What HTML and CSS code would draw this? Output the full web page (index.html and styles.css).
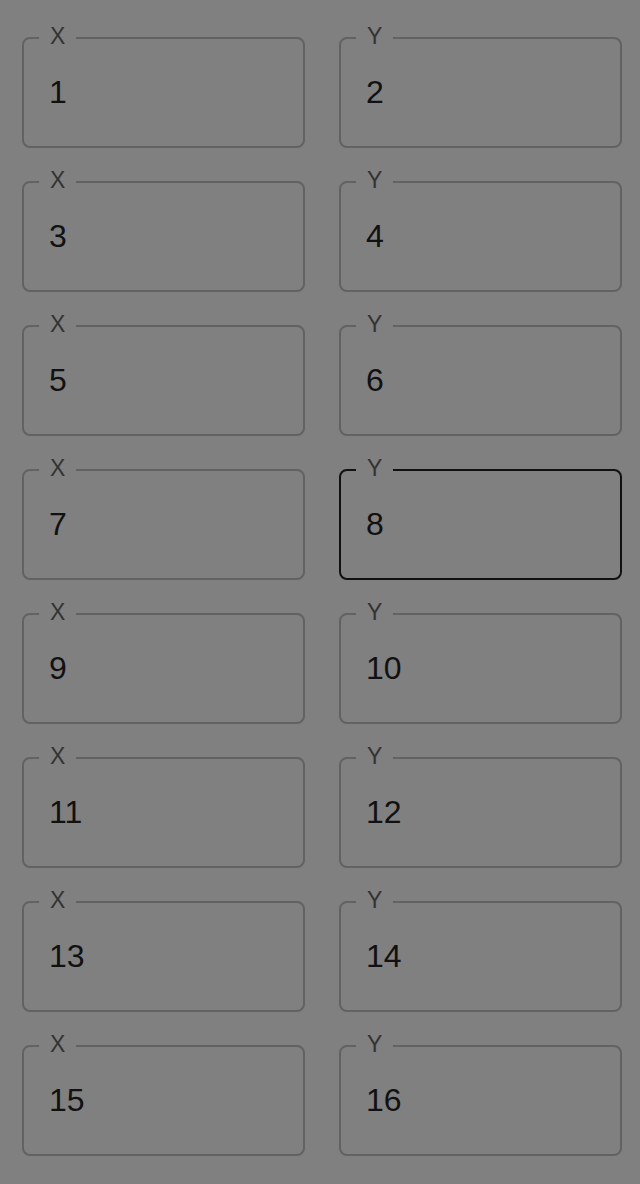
FILE: index.html
```html
<!DOCTYPE html>
<html lang="en">
<head>
    <meta charset="UTF-8">
    <meta name="viewport" content="width=device-width, initial-scale=1.0">
    <title>Coordinates</title>
    <link rel="stylesheet" href="styles.css">
</head>
<body>
    <div class="coord-grid">
        <fieldset class="field"><legend>X</legend><div class="value">1</div></fieldset>
        <fieldset class="field"><legend>Y</legend><div class="value">2</div></fieldset>
        <fieldset class="field"><legend>X</legend><div class="value">3</div></fieldset>
        <fieldset class="field"><legend>Y</legend><div class="value">4</div></fieldset>
        <fieldset class="field"><legend>X</legend><div class="value">5</div></fieldset>
        <fieldset class="field"><legend>Y</legend><div class="value">6</div></fieldset>
        <fieldset class="field"><legend>X</legend><div class="value">7</div></fieldset>
        <fieldset class="field focused"><legend>Y</legend><div class="value">8</div></fieldset>
        <fieldset class="field"><legend>X</legend><div class="value">9</div></fieldset>
        <fieldset class="field"><legend>Y</legend><div class="value">10</div></fieldset>
        <fieldset class="field"><legend>X</legend><div class="value">11</div></fieldset>
        <fieldset class="field"><legend>Y</legend><div class="value">12</div></fieldset>
        <fieldset class="field"><legend>X</legend><div class="value">13</div></fieldset>
        <fieldset class="field"><legend>Y</legend><div class="value">14</div></fieldset>
        <fieldset class="field"><legend>X</legend><div class="value">15</div></fieldset>
        <fieldset class="field"><legend>Y</legend><div class="value">16</div></fieldset>
    </div>
</body>
</html>
```

FILE: styles.css
```css
* {
    margin: 0;
    padding: 0;
    box-sizing: border-box;
    font-family: "Liberation Sans", Arial, sans-serif;
}

body {
    background: #808080;
    min-height: 100vh;
}

.coord-grid {
    display: grid;
    grid-template-columns: 1fr 1fr;
    column-gap: 34px;
    row-gap: 20px;
    padding: 24px 18px 0 22px;
}

.field {
    border: 2px solid #626262;
    border-radius: 8px;
    padding: 20px 0 34px 15px;
    min-width: 0;
}

.field legend {
    font-size: 23px;
    line-height: 24px;
    color: #333;
    padding: 0 11px 4px;
}

.field.focused {
    border-color: #111;
}

.value {
    font-size: 32px;
    line-height: 40px;
    color: #111;
    padding-left: 10px;
}
```
